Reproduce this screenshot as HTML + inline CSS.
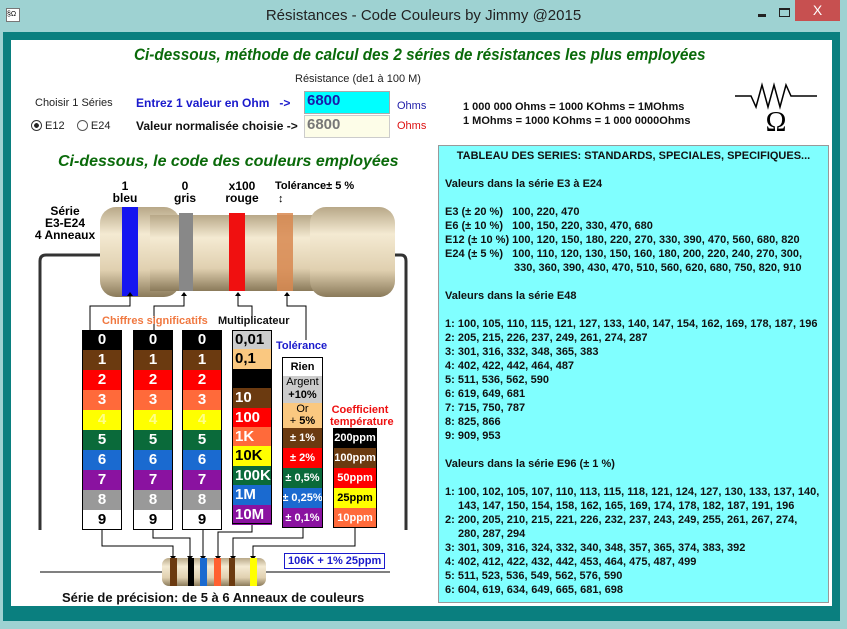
<!DOCTYPE html>
<html><head><meta charset="utf-8"><style>
*{margin:0;padding:0;box-sizing:border-box}
body{width:847px;height:629px;background:#9ed2d2;position:relative;overflow:hidden;font-family:"Liberation Sans",sans-serif}
.a{position:absolute;white-space:nowrap}
.b{font-weight:bold}
.cell{position:absolute;height:20px;font:bold 15px "Liberation Sans",sans-serif;color:#fff;text-align:center;line-height:20px}
.panel{position:absolute;left:438px;top:145px;width:391px;height:458px;background:#80ffff;border:1px solid #999;font:bold 11px "Liberation Sans",sans-serif;line-height:14px;padding:3px 0 0 6px;color:#111}
.panel div{height:14px;white-space:nowrap}
</style></head><body>
<div class="a" style="left:0;top:0;width:847px;height:32px;background:#9ed2d2"></div>
<div class="a" style="left:6px;top:8px;width:14px;height:14px;border:1px solid #777;background:#fff;font-size:7px;line-height:12px">§Ω</div>
<div class="a" style="left:0;top:7px;width:847px;text-align:center;font-size:15px;color:#222">Résistances - Code Couleurs by Jimmy @2015</div>
<div class="a" style="left:758px;top:14px;width:8px;height:3px;background:#222"></div>
<div class="a" style="left:779px;top:8px;width:11px;height:9px;border:1px solid #222;border-top-width:2px"></div>
<div class="a" style="left:795px;top:0;width:45px;height:21px;background:#c75050;color:#fff;text-align:center;font-size:14px;line-height:20px">X</div>
<div class="a" style="left:3px;top:32px;width:837px;height:589px;background:#0a7f7f"></div>
<div class="a" style="left:11px;top:40px;width:821px;height:566px;background:#fff"></div>

<div class="a b" style="left:134px;top:45px;font-size:17px;font-style:italic;color:#0a6a0a;transform:scaleX(0.9);transform-origin:0 0">Ci-dessous, méthode de calcul des 2 séries de résistances les plus employées</div>
<div class="a" style="left:295px;top:73px;font-size:11px;color:#222">Résistance (de1 à 100 M)</div>
<div class="a" style="left:35px;top:97px;font-size:11px;color:#222">Choisir 1 Séries</div>
<div class="a" style="left:31px;top:120px;font-size:11px;color:#222"><span style="display:inline-block;width:11px;height:11px;border:1px solid #333;border-radius:50%;vertical-align:-2px;background:radial-gradient(#222 35%,#fff 40%)"></span> E12 &nbsp;&nbsp; <span style="display:inline-block;width:11px;height:11px;border:1px solid #555;border-radius:50%;vertical-align:-2px"></span> E24</div>
<div class="a b" style="left:136px;top:96px;font-size:12px;color:#1a1acc">Entrez 1 valeur en Ohm &nbsp;&nbsp;-&gt;</div>
<div class="a b" style="left:136px;top:119px;font-size:12px;color:#111">Valeur normalisée choisie -&gt;</div>
<div class="a b" style="left:304px;top:91px;width:86px;height:23px;background:#00ffff;border:1px solid #aaa;font-size:15px;color:#1a1aaa;padding-left:2px">6800</div>
<div class="a b" style="left:304px;top:115px;width:86px;height:23px;background:#fdfde8;border:1px solid #ccc;font-size:15px;color:#777;padding-left:2px">6800</div>
<div class="a" style="left:397px;top:100px;font-size:11px;color:#2020aa">Ohms</div>
<div class="a" style="left:397px;top:120px;font-size:11px;color:#dd1010">Ohms</div>
<div class="a b" style="left:463px;top:100px;font-size:11px;line-height:14px;color:#111">1 000 000 Ohms = 1000 KOhms = 1MOhms<br>1 MOhms = 1000 KOhms = 1 000 0000Ohms</div>
<svg class="a" style="left:735px;top:80px" width="85" height="55"><polyline points="0,16 16,16 21,27 27,5 33,27 39,5 45,27 51,5 56,16 82,16" fill="none" stroke="#000" stroke-width="1.5"/><text x="41" y="51" text-anchor="middle" font-family="Liberation Serif" font-size="28">Ω</text></svg>

<div class="a b" style="left:58px;top:153px;font-size:16px;font-style:italic;color:#0a6a0a">Ci-dessous, le code des couleurs employées</div>
<div class="a b" style="left:110px;top:180px;font-size:12px;line-height:12px;text-align:center;width:30px">1<br>bleu</div>
<div class="a b" style="left:170px;top:180px;font-size:12px;line-height:12px;text-align:center;width:30px">0<br>gris</div>
<div class="a b" style="left:221px;top:180px;font-size:12px;line-height:12px;text-align:center;width:42px">x100<br>rouge</div>
<div class="a b" style="left:275px;top:180px;font-size:11px;line-height:13px">Tolérance± 5 %<br>&nbsp;↕</div>
<div class="a b" style="left:30px;top:205px;font-size:12px;line-height:12px;text-align:center;width:70px">Série<br>E3-E24<br>4 Anneaux</div>

<svg class="a" style="left:0;top:0" width="847" height="629">
<defs><linearGradient id="g" x1="0" y1="0" x2="0" y2="1"><stop offset="0" stop-color="#b8a888"/><stop offset=".3" stop-color="#f4ead2"/><stop offset=".7" stop-color="#e0d0b0"/><stop offset="1" stop-color="#8a7a5a"/></linearGradient></defs>
<path d="M40,530 V261 Q40,255 46,255 H105 M392,255 H401 Q406,255 406,261 V530" fill="none" stroke="#333" stroke-width="3"/>
<rect x="100" y="207" width="80" height="90" rx="16" fill="url(#g)"/>
<rect x="150" y="215" width="180" height="76" fill="url(#g)"/>
<rect x="310" y="207" width="85" height="90" rx="16" fill="url(#g)"/>
<rect x="122" y="207" width="16" height="89" fill="#1515f0"/>
<rect x="179" y="213" width="14" height="78" fill="#888"/>
<rect x="229" y="213" width="16" height="78" fill="#f01010"/>
<rect x="277" y="213" width="16" height="78" fill="#d88850" opacity=".85"/>
<g fill="none" stroke="#000" stroke-width="1">
<path d="M90,330 V306 H130 V296"/><path d="M154,330 V306 H184 V296"/><path d="M238,296 V306 H252 V320"/><path d="M287,296 V306 H306 V340"/>
<path d="M102,529 V546 H173 V556"/><path d="M153,529 V538 H190 V556"/><path d="M203,529 V556"/><path d="M252,523 V532 H218 V556"/><path d="M303,527 V538 H233 V556"/><path d="M355,527 V546 H253 V556"/>
<path d="M40,572 H162 M265,572 H390"/>
</g>
<g fill="#000"><path d="M127,296 l3,-4 3,4z"/><path d="M181,296 l3,-4 3,4z"/><path d="M235,296 l3,-4 3,4z"/><path d="M284,296 l3,-4 3,4z"/>
<path d="M170,556 l3,4 3,-4z"/><path d="M187,556 l3,4 3,-4z"/><path d="M200,556 l3,4 3,-4z"/><path d="M215,556 l3,4 3,-4z"/><path d="M230,556 l3,4 3,-4z"/><path d="M250,556 l3,4 3,-4z"/></g>
<rect x="162" y="558" width="104" height="28" rx="7" fill="url(#g)"/>
<rect x="170" y="558" width="7" height="28" fill="#6b3a10"/><rect x="188" y="558" width="6" height="28" fill="#000"/><rect x="200" y="558" width="7" height="28" fill="#1a6ad0"/><rect x="214" y="558" width="7" height="28" fill="#ff6030"/><rect x="229" y="558" width="6" height="28" fill="#6b3a10"/><rect x="250" y="558" width="7" height="28" fill="#ffff00"/>
</svg>

<div class="a b" style="left:102px;top:315px;font-size:11px;color:#f07840">Chiffres significatifs</div>
<div class="a b" style="left:218px;top:315px;font-size:11px;color:#111">Multiplicateur</div>
<div class="a b" style="left:276px;top:340px;font-size:11px;color:#1a1acc">Tolérance</div>
<div class="a b" style="left:330px;top:404px;font-size:11px;line-height:12px;color:#ee1010;text-align:center;width:60px">Coefficient<br>température</div>

<div id="cols"></div>
<script>
var c=['#000','#6b3a10','#f00','#ff6a3a','#ffff00','#0a6a3a','#1a6ad0','#8a12a0','#999','#fff'];
var h='';
[82,133,182].forEach(function(x){for(var i=0;i<10;i++){h+='<div class="cell" style="left:'+x+'px;top:'+(330+i*20)+'px;width:40px;background:'+c[i]+';color:'+(i==9?'#000':i==4?'#ff8':'#fff')+'">'+i+'</div>'}
h+='<div class="a" style="left:'+x+'px;top:330px;width:40px;height:200px;border:1px solid #000"></div>'});
var m=[['0,01','#ccc','#000'],['0,1','#fac880','#000'],['','#000','#fff'],['10','#6b3a10','#fff'],['100','#f00','#fff'],['1K','#ff6a3a','#fff'],['10K','#ff0','#000'],['100K','#0a6a3a','#fff'],['1M','#1a6ad0','#fff'],['10M','#8a12a0','#fff']];
m.forEach(function(r,i){h+='<div class="cell" style="left:232px;top:'+(330+i*19.4)+'px;height:20px;width:40px;text-align:left;padding-left:3px;background:'+r[1]+';color:'+r[2]+'">'+r[0]+'</div>'});
h+='<div class="a" style="left:232px;top:330px;width:40px;height:194px;border:1px solid #000"></div>';
var t=[['± 1%','#6b3a10'],['± 2%','#f00'],['± 0,5%','#0a6a3a'],['± 0,25%','#1a6ad0'],['± 0,1%','#8a12a0']];
t.forEach(function(r,i){h+='<div class="cell" style="left:282px;top:'+(428+i*20)+'px;width:41px;font-size:11px;background:'+r[1]+'">'+r[0]+'</div>'});
var p=[['200ppm','#000'],['100ppm','#6b3a10'],['50ppm','#f00'],['25ppm','#ff0'],['10ppm','#ff6a3a']];
p.forEach(function(r,i){h+='<div class="cell" style="left:333px;top:'+(428+i*20)+'px;width:44px;font-size:11px;background:'+r[1]+';color:'+(i==3?'#000':'#fff')+'">'+r[0]+'</div>'});
document.getElementById('cols').innerHTML=h;
</script>
<div class="a b" style="left:282px;top:357px;width:41px;height:20px;background:#fff;font-size:11px;text-align:center;line-height:18px;border:1px solid #000">Rien</div>
<div class="a" style="left:282px;top:376px;width:41px;height:27px;background:#ccc;font-size:11px;text-align:center;line-height:13px">Argent<br><b>+10%</b></div>
<div class="a" style="left:282px;top:403px;width:41px;height:25px;background:#fac880;font-size:11px;text-align:center;line-height:12px">Or<br>+ <b>5%</b></div>
<div class="a" style="left:282px;top:357px;width:41px;height:171px;border:1px solid #000"></div>
<div class="a" style="left:333px;top:428px;width:44px;height:100px;border:1px solid #000"></div>
<div class="a b" style="left:284px;top:553px;font-size:11px;color:#1a1acc;border:1px solid #1a1acc;padding:1px 3px">106K + 1% 25ppm</div>
<div class="a b" style="left:62px;top:590px;font-size:13px;color:#111">Série de précision: de 5 à 6 Anneaux de couleurs</div>

<div class="panel">
<div style="text-align:center;padding-right:6px">TABLEAU DES SERIES: STANDARDS, SPECIALES, SPECIFIQUES...</div>
<div></div>
<div>Valeurs dans la série E3 à E24</div><div></div>
<div>E3 (± 20 %) &nbsp;&nbsp;100, 220, 470</div>
<div>E6 (± 10 %) &nbsp;&nbsp;100, 150, 220, 330, 470, 680</div>
<div>E12 (± 10 %) 100, 120, 150, 180, 220, 270, 330, 390, 470, 560, 680, 820</div>
<div>E24 (± 5 %) &nbsp;&nbsp;100, 110, 120, 130, 150, 160, 180, 200, 220, 240, 270, 300,</div>
<div style="padding-left:69px">330, 360, 390, 430, 470, 510, 560, 620, 680, 750, 820, 910</div>
<div></div>
<div>Valeurs dans la série E48</div><div></div>
<div>1: 100, 105, 110, 115, 121, 127, 133, 140, 147, 154, 162, 169, 178, 187, 196</div>
<div>2: 205, 215, 226, 237, 249, 261, 274, 287</div>
<div>3: 301, 316, 332, 348, 365, 383</div>
<div>4: 402, 422, 442, 464, 487</div>
<div>5: 511, 536, 562, 590</div>
<div>6: 619, 649, 681</div>
<div>7: 715, 750, 787</div>
<div>8: 825, 866</div>
<div>9: 909, 953</div>
<div></div>
<div>Valeurs dans la série E96 (± 1 %)</div><div></div>
<div>1: 100, 102, 105, 107, 110, 113, 115, 118, 121, 124, 127, 130, 133, 137, 140,</div>
<div style="padding-left:13px">143, 147, 150, 154, 158, 162, 165, 169, 174, 178, 182, 187, 191, 196</div>
<div>2: 200, 205, 210, 215, 221, 226, 232, 237, 243, 249, 255, 261, 267, 274,</div>
<div style="padding-left:13px">280, 287, 294</div>
<div>3: 301, 309, 316, 324, 332, 340, 348, 357, 365, 374, 383, 392</div>
<div>4: 402, 412, 422, 432, 442, 453, 464, 475, 487, 499</div>
<div>5: 511, 523, 536, 549, 562, 576, 590</div>
<div>6: 604, 619, 634, 649, 665, 681, 698</div>
</div>
</body></html>
